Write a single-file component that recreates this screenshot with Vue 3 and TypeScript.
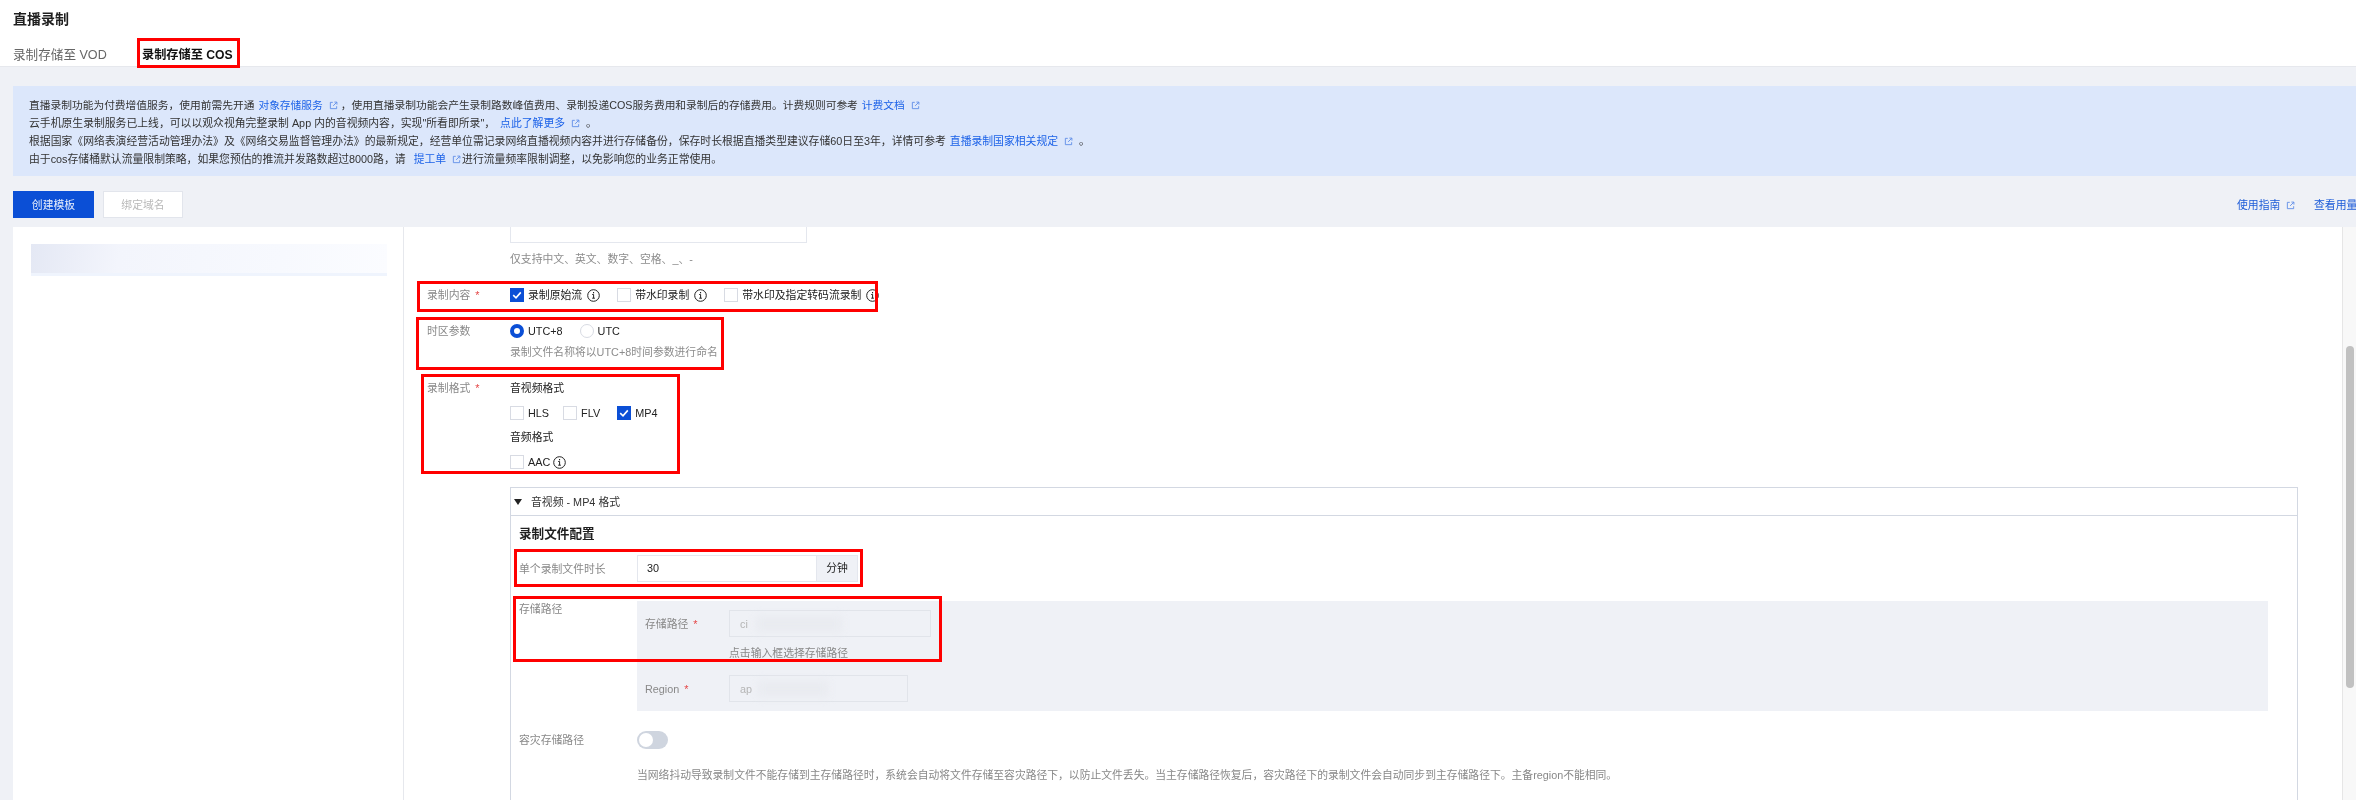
<script setup lang="ts">
const noteText: string =
  '当网络抖动导致录制文件不能存储到主存储路径时，系统会自动将文件存储至容灾路径下，以防止文件丢失。当主存储路径恢复后，容灾路径下的录制文件会自动同步到主存储路径下。主备region不能相同。'
const annotations: { name: string; left: number; top: number; width: number; height: number }[] = [
  { name: 'tab', left: 137, top: 38, width: 103, height: 30 },
  { name: 'content', left: 417, top: 281, width: 461, height: 31 },
  { name: 'timezone', left: 416, top: 317, width: 308, height: 53 },
  { name: 'format', left: 421, top: 374, width: 259, height: 100 },
  { name: 'duration', left: 514, top: 549, width: 349, height: 38 },
  { name: 'storage', left: 513, top: 596, width: 429, height: 66 },
]
</script>

<template>
  <div class="page">
    <svg class="defs" width="0" height="0" aria-hidden="true">
      <symbol id="ext" viewBox="0 0 10 10">
        <path d="M4.2 1.5H1.5v7h7V5.8" fill="none" stroke="currentColor" stroke-width="1" />
        <path d="M4.6 5.4 8.6 1.4M6 1.2h2.8V4" fill="none" stroke="currentColor" stroke-width="1" />
      </symbol>
      <symbol id="info" viewBox="0 0 13 13">
        <circle cx="6.5" cy="6.5" r="5.8" fill="none" stroke="#222" stroke-width="1" />
        <rect x="6" y="3" width="1.1" height="1.3" fill="#222" />
        <path d="M5.2 5.5h1.4v3.6M5.2 9.2h2.7" fill="none" stroke="#222" stroke-width="1" />
      </symbol>
      <symbol id="tick" viewBox="0 0 14 14">
        <path d="M3.2 7.2 6 9.8l4.8-5.4" fill="none" stroke="#fff" stroke-width="1.6" />
      </symbol>
    </svg>

    <header class="header">
      <h1 class="title">直播录制</h1>
      <nav class="tabs">
        <span class="tab">录制存储至 VOD</span>
        <span class="tab tab-active">录制存储至 COS</span>
      </nav>
    </header>

    <main class="body">
      <section class="alert">
        <p class="line-first">直播录制功能为付费增值服务，使用前需先开通 <a class="link">对象存储服务</a><svg class="ext"><use href="#ext" /></svg>，使用直播录制功能会产生录制路数峰值费用、录制投递COS服务费用和录制后的存储费用。计费规则可参考 <a class="link">计费文档</a><svg class="ext"><use href="#ext" /></svg></p>
        <p>云手机原生录制服务已上线，可以以观众视角完整录制 App 内的音视频内容，实现"所看即所录"， <a class="link link-gap">点此了解更多</a><svg class="ext"><use href="#ext" /></svg> 。</p>
        <p>根据国家《网络表演经营活动管理办法》及《网络交易监督管理办法》的最新规定，经营单位需记录网络直播视频内容并进行存储备份，保存时长根据直播类型建议存储60日至3年，详情可参考 <a class="link">直播录制国家相关规定</a><svg class="ext"><use href="#ext" /></svg> 。</p>
        <p>由于cos存储桶默认流量限制策略，如果您预估的推流并发路数超过8000路，请 <a class="link link-ticket">提工单</a><svg class="ext ext-tight"><use href="#ext" /></svg>进行流量频率限制调整，以免影响您的业务正常使用。</p>
      </section>

      <div class="toolbar">
        <button class="btn btn-primary">创建模板</button>
        <button class="btn btn-disabled">绑定域名</button>
        <div class="toolbar-links">
          <a class="tool-link">使用指南<svg class="ext ext-tool"><use href="#ext" /></svg></a>
          <a class="tool-link tool-link-last">查看用量</a>
        </div>
      </div>

      <div class="pane">
        <aside class="side">
          <div class="skeleton"></div>
        </aside>

        <div class="form">
          <div class="name-input"></div>
          <div class="hint hint-name">仅支持中文、英文、数字、空格、_、-</div>

          <div class="row row-content">
            <label class="label">录制内容<i class="star">*</i></label>
            <div class="controls">
              <span class="cb cb-on"><svg><use href="#tick" /></svg></span>
              <span class="cb-text">录制原始流</span><svg class="info"><use href="#info" /></svg>
              <span class="cb cb-second"></span>
              <span class="cb-text">带水印录制</span><svg class="info"><use href="#info" /></svg>
              <span class="cb cb-third"></span>
              <span class="cb-text">带水印及指定转码流录制</span><svg class="info"><use href="#info" /></svg>
            </div>
          </div>

          <div class="row row-tz">
            <label class="label">时区参数</label>
            <div class="controls">
              <span class="radio radio-on"></span><span class="cb-text">UTC+8</span>
              <span class="radio radio-off"></span><span class="cb-text">UTC</span>
            </div>
          </div>
          <div class="hint hint-tz">录制文件名称将以UTC+8时间参数进行命名</div>

          <div class="row row-format">
            <label class="label">录制格式<i class="star">*</i></label>
            <div class="format">
              <div class="format-title">音视频格式</div>
              <div class="format-line">
                <span class="cb"></span><span class="cb-text">HLS</span>
                <span class="cb cb-flv"></span><span class="cb-text">FLV</span>
                <span class="cb cb-on cb-mp4"><svg><use href="#tick" /></svg></span><span class="cb-text">MP4</span>
              </div>
              <div class="format-title format-title-2">音频格式</div>
              <div class="format-line">
                <span class="cb"></span><span class="cb-text">AAC</span><svg class="info info-aac"><use href="#info" /></svg>
              </div>
            </div>
          </div>

          <section class="collapse">
            <div class="collapse-head"><span class="triangle"></span>音视频 - MP4 格式</div>
            <div class="collapse-body">
              <h3 class="section-title">录制文件配置</h3>

              <div class="cfg-row cfg-duration">
                <span class="cfg-label">单个录制文件时长</span>
                <div class="duration">
                  <span class="duration-value">30</span>
                  <span class="duration-unit">分钟</span>
                </div>
              </div>

              <div class="cfg-row cfg-storage">
                <span class="cfg-label">存储路径</span>
                <div class="storage">
                  <div class="storage-line">
                    <span class="storage-label">存储路径<i class="star">*</i></span>
                    <div class="ghost ghost-path">ci<span class="smudge smudge-path"></span></div>
                  </div>
                  <div class="storage-hint">点击输入框选择存储路径</div>
                  <div class="storage-line storage-region">
                    <span class="storage-label">Region<i class="star">*</i></span>
                    <div class="ghost ghost-region">ap<span class="smudge smudge-region"></span></div>
                  </div>
                </div>
              </div>

              <div class="cfg-row cfg-switch">
                <span class="cfg-label">容灾存储路径</span>
                <span class="switch"><span class="knob"></span></span>
              </div>
              <p class="note">{{ noteText }}</p>
            </div>
          </section>
        </div>

        <div class="scrollbar"><span class="thumb"></span></div>
      </div>
    </main>

    <div
      v-for="a in annotations"
      :key="a.name"
      class="annotation"
      :style="{ left: a.left + 'px', top: a.top + 'px', width: a.width + 'px', height: a.height + 'px' }"
    ></div>
  </div>
</template>

<style>
html,
body {
  margin: 0;
  overflow: hidden;
}
</style>

<style scoped>
* {
  box-sizing: border-box;
}
.page {
  position: relative;
  width: 2356px;
  height: 800px;
  overflow: hidden;
  background: #eff1f6;
  color: #2a2a2a;
  font-family: "Liberation Sans", "Noto Sans CJK SC", sans-serif;
  font-size: 10.83px;
  line-height: 16px;
  filter: blur(0.35px);
}
.defs {
  position: absolute;
}
.header {
  height: 67px;
  background: #fff;
  border-bottom: 1px solid #e6e8ed;
  padding-left: 13px;
}
.title {
  margin: 0;
  padding-top: 11px;
  font-size: 14px;
  line-height: 16px;
  font-weight: 700;
  color: #1f1f1f;
}
.tabs {
  display: flex;
  margin-top: 17px;
  font-size: 12.6px;
  line-height: 22px;
}
.tab {
  color: #666;
  width: 129px;
  white-space: nowrap;
}
.tab-active {
  color: #111;
  font-weight: 700;
  font-size: 12.2px;
}
.body {
  padding: 19px 0 0 13px;
}
.alert {
  height: 90px;
  background: #dce7fb;
  padding: 10px 16px;
  line-height: 18px;
  color: #333;
}
.alert p {
  margin: 0;
  white-space: nowrap;
}
.alert .line-first {
  font-size: 10.74px;
}
.link {
  color: #1c62e8;
  margin-left: 1px;
}
.link-gap {
  margin-left: 2px;
}
.link-ticket {
  margin-left: 5px;
}
.ext {
  width: 9px;
  height: 9px;
  margin: 0 3px 0 6px;
  color: #5f8de8;
  vertical-align: -1px;
}
.ext-tight {
  margin-right: 1px;
}
.toolbar {
  display: flex;
  align-items: center;
  height: 27px;
  margin-top: 15px;
}
.btn {
  width: 81px;
  height: 27px;
  padding: 0;
  border: 1px solid #e2e5ec;
  font: inherit;
  margin-right: 9px;
}
.btn-primary {
  background: #0b4fd6;
  border-color: #0b4fd6;
  color: #e6edfb;
}
.btn-disabled {
  width: 80px;
  background: #fff;
  color: #b8b8b8;
}
.toolbar-links {
  display: flex;
  margin-left: auto;
  color: #1c5bd8;
}
.tool-link {
  width: 77px;
  white-space: nowrap;
}
.tool-link-last {
  width: 42px;
}
.ext-tool {
  margin: 0 0 0 6px;
}
.pane {
  display: flex;
  height: 573px;
  margin-top: 9px;
  background: #fff;
}
.side {
  flex: 0 0 391px;
  border-right: 1px solid #e6e8ed;
  padding: 17px 16px 0 18px;
}
.skeleton {
  height: 32px;
  background: linear-gradient(100deg, #e4e8f4 0%, #f3f5fc 25%, #f7f9fe 70%, #fbfcff 100%);
  border-bottom: 3px solid #eff4fd;
}
.form {
  flex: 1;
  min-width: 0;
  padding-left: 23px;
}
.name-input {
  width: 297px;
  height: 16px;
  margin-left: 83px;
  border: 1px solid #e4e7ee;
  border-top: 0;
}
.hint {
  margin-left: 83px;
  color: #8c8c8c;
  white-space: nowrap;
}
.hint-name {
  margin-top: 8px;
}
.row {
  display: flex;
}
.row-content {
  margin-top: 20px;
}
.row-tz {
  margin-top: 20px;
}
.hint-tz {
  margin-top: 5px;
}
.row-format {
  margin-top: 20px;
}
.label {
  flex: 0 0 83px;
  color: #888;
  white-space: nowrap;
}
.star {
  font-style: normal;
  color: #e54545;
  margin-left: 5px;
}
.controls {
  display: flex;
  align-items: center;
  height: 16px;
}
.cb {
  flex: none;
  position: relative;
  width: 14px;
  height: 14px;
  background: #fff;
  border: 1px solid #d8dbe3;
}
.cb svg {
  position: absolute;
  left: -1px;
  top: -1px;
  width: 14px;
  height: 14px;
}
.cb-on {
  background: #0b4fd6;
  border-color: #0b4fd6;
}
.cb-text {
  margin-left: 4px;
  color: #222;
  white-space: nowrap;
}
.info {
  flex: none;
  width: 13px;
  height: 13px;
  margin-left: 5px;
}
.cb-second {
  margin-left: 17px;
}
.cb-third {
  margin-left: 17px;
}
.radio {
  flex: none;
  width: 14px;
  height: 14px;
  border-radius: 50%;
}
.radio-on {
  background: #fff;
  border: 4px solid #0b4fd6;
}
.radio-off {
  margin-left: 17px;
  background: #fff;
  border: 1px solid #d8dbe3;
}
.format-title {
  color: #222;
}
.format-title-2 {
  margin-top: 8px;
}
.format-line {
  display: flex;
  align-items: center;
  height: 16px;
  margin-top: 9px;
}
.cb-flv {
  margin-left: 14px;
}
.cb-mp4 {
  margin-left: 17px;
}
.info-aac {
  margin-left: 3px;
}
.collapse {
  width: 1788px;
  height: 400px;
  margin: 17px 0 0 83px;
  border: 1px solid #d3d8e2;
  border-bottom: 0;
}
.collapse-head {
  display: flex;
  align-items: center;
  height: 28px;
  padding-left: 3px;
  border-bottom: 1px solid #d3d8e2;
  color: #333;
}
.triangle {
  width: 0;
  height: 0;
  margin-right: 9px;
  border-left: 4px solid transparent;
  border-right: 4px solid transparent;
  border-top: 6px solid #222;
}
.collapse-body {
  padding: 10px 0 0 8px;
}
.section-title {
  margin: 0;
  font-size: 12.6px;
  line-height: 16px;
  font-weight: 700;
  color: #1f1f1f;
}
.cfg-row {
  display: flex;
}
.cfg-label {
  flex: 0 0 118px;
  color: #888;
  white-space: nowrap;
}
.cfg-duration {
  align-items: center;
  margin-top: 13px;
}
.duration {
  display: flex;
  width: 221px;
  height: 27px;
  border: 1px solid #e4e7ee;
}
.duration-value {
  flex: 1;
  padding-left: 9px;
  line-height: 25px;
  color: #222;
}
.duration-unit {
  width: 41px;
  background: #eff1f6;
  border-left: 1px solid #e4e7ee;
  text-align: center;
  line-height: 25px;
  color: #222;
}
.cfg-storage {
  margin-top: 19px;
}
.storage {
  width: 1631px;
  height: 110px;
  padding: 9px 0 0 8px;
  background: #eff1f6;
}
.storage-line {
  display: flex;
  align-items: center;
}
.storage-label {
  flex: 0 0 84px;
  color: #888;
}
.ghost {
  display: flex;
  align-items: center;
  height: 27px;
  padding-left: 10px;
  border: 1px solid #e1e4ea;
  color: #b5b5b5;
}
.ghost-path {
  width: 202px;
}
.ghost-region {
  width: 179px;
}
.smudge {
  height: 16px;
  background: #e9ebf0;
  filter: blur(4px);
}
.smudge-path {
  width: 86px;
  margin-left: 8px;
}
.smudge-region {
  width: 70px;
  margin-left: 6px;
}
.storage-hint {
  margin: 8px 0 0 84px;
  color: #888;
}
.storage-region {
  margin-top: 14px;
}
.cfg-switch {
  align-items: center;
  margin-top: 20px;
}
.switch {
  display: block;
  position: relative;
  width: 31px;
  height: 18px;
  border-radius: 9px;
  background: #cfd5df;
}
.knob {
  position: absolute;
  left: 2px;
  top: 2px;
  width: 14px;
  height: 14px;
  border-radius: 50%;
  background: #fff;
}
.note {
  margin: 18px 0 0 118px;
  font-size: 10.8px;
  color: #888;
  white-space: nowrap;
}
.scrollbar {
  flex: 0 0 14px;
  position: relative;
  background: #f8f8f8;
  border-left: 1px solid #e6e6e6;
}
.thumb {
  position: absolute;
  left: 3px;
  top: 119px;
  width: 8px;
  height: 342px;
  border-radius: 4px;
  background: #c1c1c1;
}
.annotation {
  position: absolute;
  border: 3px solid #f00;
  pointer-events: none;
}
</style>
